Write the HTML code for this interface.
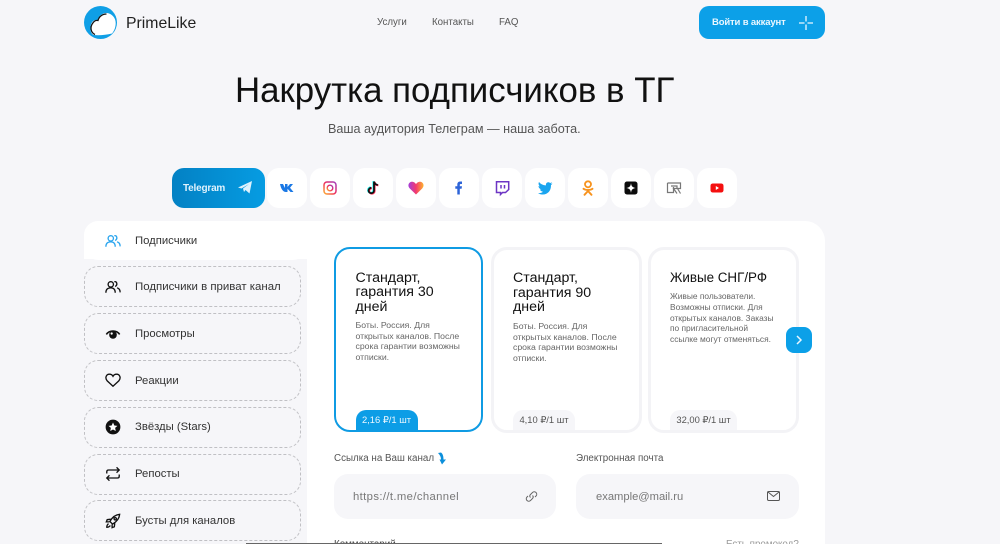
<!DOCTYPE html>
<html lang="ru"><head><meta charset="utf-8"><title>PrimeLike</title>
<style>
html,body{margin:0;padding:0;width:1000px;height:544px;overflow:hidden}
body{background:#f6f6f9;font-family:"Liberation Sans",sans-serif;color:#111}
#w{position:relative;width:1000px;height:544px;overflow:hidden}
.t{position:absolute;white-space:nowrap;line-height:1}
.a{position:absolute}
.s{position:absolute;top:168px;width:40px;height:40px;background:#fff;border-radius:12px}
.s svg{position:absolute;left:10px;top:10px;width:20px;height:20px}
.i{position:absolute;left:84px;width:215px;height:39px;border:1px dashed #c0c0c4;border-radius:14px}
.ic{position:absolute;left:105px;width:16px;height:16px;fill:none;stroke:#111;stroke-width:1.5}
.c{position:absolute;top:247px;width:144px;height:180px;border:3px solid #f3f3f6;border-radius:16px;background:#fff;overflow:hidden}
.h{position:absolute;left:19px;top:21px;font-size:14.2px;line-height:14.5px;color:#111;white-space:nowrap}
.d{position:absolute;left:19px;font-size:8.7px;line-height:10.7px;color:#666;white-space:nowrap}
.p{position:absolute;left:19px;bottom:0;height:20px;background:#f6f6f9;border-radius:10px 10px 0 0;font-size:9.4px;line-height:20px;text-align:center;color:#555}
.f{position:absolute;top:474px;width:222px;height:45px;background:#f6f6f9;border-radius:14px}
</style></head><body><div id="w">

<svg class="a" style="left:84px;top:6px" width="33" height="33" viewBox="0 0 33 33"><circle cx="16.500" cy="16.500" r="16.500" fill="#0f9fe6"/><path d="M10 29C6 28 6 21 7 18.500C8 15 11 13.500 13.500 14C15 9.500 19 6.700 23 7C28 7.500 31.700 12 31.700 17C31.700 21 30.500 24.500 28 27.500C22 29 15 29.500 10 29Z" fill="#fff"/><path d="M11 28.500C6.500 26.500 6 21 8.500 17.500C10 15 12 14 14 14.500C15 10.500 18.500 8 22.500 8" fill="none" stroke="#111" stroke-width="1.300"/></svg>
<div class="t" style="left:126px;top:15.500px;font-size:15.800px;color:#222">PrimeLike</div>
<div class="t" style="left:377px;top:18px;font-size:9.700px;color:#555">Услуги</div>
<div class="t" style="left:432px;top:18px;font-size:9.700px;color:#555">Контакты</div>
<div class="t" style="left:499px;top:18px;font-size:9.700px;color:#555">FAQ</div>

<div class="a" style="left:699px;top:6px;width:126px;height:33px;border-radius:10px;background:#0ca0e8"></div>
<div class="t" style="left:712px;top:18px;font-size:9.500px;font-weight:bold;color:#eaf7ff;letter-spacing:-.15px">Войти в аккаунт</div>
<svg class="a" style="left:799px;top:16px" width="14" height="14" viewBox="0 0 14 14"><path d="M0 7H5.500M8.500 7H14M7 0V5.500M7 8.500V14" stroke="#eaf7ff" stroke-width="1.300"/></svg>

<div class="t" style="left:235px;top:73.500px;font-size:34.850px;color:#111">Накрутка подписчиков в ТГ</div>
<div class="t" style="left:328px;top:123.300px;font-size:12.620px;color:#555">Ваша аудитория Телеграм — наша забота.</div>

<div class="a" style="left:172px;top:168px;width:93px;height:40px;border-radius:12px;background:linear-gradient(90deg,#0381c4,#069ce2)"></div>
<div class="t" style="left:183px;top:183.500px;font-size:10px;font-weight:bold;color:#dff2fd;letter-spacing:-.2px">Telegram</div>
<svg class="a" style="left:238px;top:181px" width="14" height="13" viewBox="0 0 14 13"><path d="M0 6.500L14 0L11.500 12.500L7.500 9L6 11L5 7.500L11 3L3.500 7.500Z" fill="#dff2fd"/></svg>

<div class="s" style="left:267px"><svg viewBox="0 0 20 20"><path d="M3 6H6L8 10V6H10.500V9L13 6H16L13 9.800L16.500 14H13.500L10.500 10.800V14H9C6 14 4 11 3 6Z" fill="#1a78e5"/></svg></div>
<div class="s" style="left:310px"><svg viewBox="0 0 20 20"><defs><linearGradient id="g" x1="0" y1="1" x2="1" y2="0"><stop offset="0" stop-color="#fdb030"/><stop offset=".5" stop-color="#ee2a5c"/><stop offset="1" stop-color="#a03fc0"/></linearGradient></defs><rect x="4" y="4" width="12" height="12" rx="3" fill="none" stroke="url(#g)" stroke-width="1.500"/><circle cx="10" cy="10" r="2.800" fill="none" stroke="url(#g)" stroke-width="1.400"/></svg></div>
<div class="s" style="left:353px"><svg viewBox="0 0 20 20"><path d="M11 3.500V12.500A2.700 2.700 0 1 1 8.300 9.800M11 3.500C11.300 5.500 12.500 6.700 14.800 7" fill="none" stroke="#25f4ee" stroke-width="2" transform="translate(-.6 -.4)"/><path d="M11 3.500V12.500A2.700 2.700 0 1 1 8.300 9.800M11 3.500C11.300 5.500 12.500 6.700 14.800 7" fill="none" stroke="#fe2c55" stroke-width="2" transform="translate(.6 .4)"/><path d="M11 3.500V12.500A2.700 2.700 0 1 1 8.300 9.800M11 3.500C11.300 5.500 12.500 6.700 14.800 7" fill="none" stroke="#111" stroke-width="1.800"/></svg></div>
<div class="s" style="left:396px"><svg viewBox="0 0 20 20"><defs><linearGradient id="l" x1="0" y1="0" x2="1" y2="0"><stop offset="0" stop-color="#a43ddb"/><stop offset=".5" stop-color="#f43a6d"/><stop offset="1" stop-color="#fdb42c"/></linearGradient></defs><path d="M10 16.500L3.800 10.500C1 7.500 3 3.800 6 3.800C8 3.800 9.300 5 10 6.200C10.700 5 12 3.800 14 3.800C17 3.800 19 7.500 16.200 10.500Z" fill="url(#l)"/></svg></div>
<div class="s" style="left:439px"><svg viewBox="0 0 20 20"><path d="M8.300 16.500V10.800H6.300V8.300H8.300V6.600C8.300 4.500 9.500 3.500 11.300 3.500H13V6H11.800C11 6 10.800 6.400 10.800 7V8.300H13L12.600 10.800H10.800V16.500Z" fill="#2d64d8"/></svg></div>
<div class="s" style="left:482px"><svg viewBox="0 0 20 20"><path d="M4.500 3.800H16.700V11.500L13.500 14.500H10.500L8.500 16.500V14.500H4.500Z" fill="none" stroke="#6d35c4" stroke-width="1.500"/><path d="M9 7V10.500M12.500 7V10.500" stroke="#6d35c4" stroke-width="1.500"/></svg></div>
<div class="s" style="left:525px"><svg viewBox="0 0 20 20"><path d="M17.500 5.500C16.900 5.800 16.300 6 15.700 6C16.400 5.600 16.800 5 17 4.300C16.400 4.700 15.700 4.900 15 5C13.500 3.500 10.500 4.500 11 7.400C8 7.300 5.500 5.900 4 4C3.100 5.500 3.700 7.500 5 8.400C4.500 8.400 4 8.200 3.500 8C3.600 9.700 4.700 11 6.400 11.300C5.900 11.500 5.400 11.500 4.900 11.400C5.400 12.800 6.600 13.700 8 13.700C6.500 14.900 4.700 15.300 3 15.200C9.500 18.800 16.300 14.800 16 7C16.600 6.600 17.100 6.100 17.500 5.500Z" fill="#1aa5ef"/></svg></div>
<div class="s" style="left:568px"><svg viewBox="0 0 20 20"><circle cx="10" cy="6.300" r="3" fill="none" stroke="#f7931e" stroke-width="1.800"/><path d="M5.500 10.800C8 12.500 12 12.500 14.500 10.800M10 12V13M10 13L6.500 16.800M10 13L13.500 16.800" fill="none" stroke="#f7931e" stroke-width="1.900" stroke-linecap="round"/></svg></div>
<div class="s" style="left:611px"><svg viewBox="0 0 20 20"><rect x="3.500" y="3.500" width="13" height="13" rx="2.500" fill="#0b0b0b"/><path d="M10 5C10.300 8.300 11.700 9.700 15 10C11.700 10.300 10.300 11.700 10 15C9.700 11.700 8.300 10.300 5 10C8.300 9.700 9.700 8.300 10 5Z" fill="#fff"/></svg></div>
<div class="s" style="left:654px"><svg viewBox="0 0 20 20"><path d="M3.500 5H16.500V10.500H13.500L16.500 15.500M3.500 5V14.500H9.500V9M7 8H13V10.500H9.500L13 15.500" fill="none" stroke="#777" stroke-width="1.200"/></svg></div>
<div class="s" style="left:697px"><svg viewBox="0 0 20 20"><rect x="3.500" y="5.500" width="13" height="9" rx="2.300" fill="#f40f0f"/><path d="M8.800 8L12 10L8.800 12Z" fill="#fff"/></svg></div>

<div class="a" style="left:84px;top:221px;width:741px;height:323px;background:#fff;border-radius:20px 20px 0 0"></div>
<div class="a" style="left:84px;top:259px;width:223px;height:285px;background:#f6f6f9"></div>
<div class="a" style="left:84px;top:221px;width:223px;height:39px;background:#fff;border-radius:14px 0 14px 14px"></div>

<svg class="ic" style="top:233px;stroke:#2ba5ee" viewBox="0 0 18 18"><circle cx="6.500" cy="6" r="3"/><path d="M1 15.500C1 11.500 3.500 10 6.500 10C9.500 10 11.500 11.500 11.500 15.500M10.500 3C13.500 2.500 14.500 6.500 11.500 8.500M13.500 10C16 10.500 17 12.500 17 15"/></svg>
<div class="t" style="left:135px;top:235.500px;font-size:11.300px;color:#333">Подписчики</div>

<div class="i" style="top:266px"></div><div class="i" style="top:313px"></div><div class="i" style="top:360px"></div><div class="i" style="top:407px"></div><div class="i" style="top:454px"></div><div class="i" style="top:500px"></div>

<svg class="ic" style="top:279px" viewBox="0 0 18 18"><circle cx="6.500" cy="6" r="3"/><path d="M1 15.500C1 11.500 3.500 10 6.500 10C9.500 10 11.500 11.500 11.500 15.500M10.500 3C13.500 2.500 14.500 6.500 11.500 8.500M13.500 10C16 10.500 17 12.500 17 15"/></svg>
<div class="t" style="left:135px;top:281.500px;font-size:11.450px;color:#333">Подписчики в приват канал</div>

<svg class="ic" style="top:326px" viewBox="0 0 18 18"><path d="M1.500 9.500C5 4.500 13 4.500 16.500 9.500" stroke-width="1.800"/><circle cx="9" cy="10" r="4.300" fill="#111" stroke="none"/><circle cx="7.500" cy="8.500" r="1.300" fill="#fff" stroke="none"/></svg>
<div class="t" style="left:135px;top:328.500px;font-size:11.300px;color:#333">Просмотры</div>

<svg class="ic" style="top:372px" viewBox="0 0 18 18"><path d="M9 16L2.500 10C-.5 6.500 1.500 2.500 5 2.500C7 2.500 8.300 3.500 9 4.800C9.700 3.500 11 2.500 13 2.500C16.500 2.500 18.500 6.500 15.500 10Z"/></svg>
<div class="t" style="left:135px;top:375.500px;font-size:11.300px;color:#333">Реакции</div>

<svg class="ic" style="top:419px" viewBox="0 0 18 18"><circle cx="9" cy="9" r="8.300" fill="#111" stroke="none"/><path d="M9 4L10.500 7.300L14 7.700L11.400 10L12.100 13.500L9 11.800L5.900 13.500L6.600 10L4 7.700L7.500 7.300Z" fill="#fff" stroke="none"/></svg>
<div class="t" style="left:135px;top:422px;font-size:11.300px;color:#333">Звёзды (Stars)</div>

<svg class="ic" style="top:466px" viewBox="0 0 18 18"><path d="M2 8.500V6.500C2 5 3 4.500 4 4.500H16M13 1.500L16 4.500L13 7.500M16 9.500V11.500C16 13 15 13.500 14 13.500H2M5 10.500L2 13.500L5 16.500"/></svg>
<div class="t" style="left:135px;top:468.500px;font-size:11.300px;color:#333">Репосты</div>

<svg class="ic" style="top:513px" viewBox="0 0 18 18"><path d="M16.500 1.500C11.500 2 8 5 5.500 9.500L8.500 12.500C13 10 16 6.500 16.500 1.500ZM6.500 7L2.500 7.500L1.500 10L5 10M11 11.500L10.500 15.500L8 16.500L8 13M4 12C2.500 13 2 15 2 16C3 16 5 15.500 6 14"/><circle cx="11.500" cy="6.500" r="1.300"/></svg>
<div class="t" style="left:135px;top:515.500px;font-size:11.300px;color:#333">Бусты для каналов</div>

<div class="c" style="left:334px;border:2.500px solid #0f9be3;width:145px;height:181px">
  <div class="h" style="left:19.500px;top:21.500px">Стандарт,<br>гарантия 30<br>дней</div>
  <div class="d" style="left:19.500px;top:71px">Боты. Россия. Для<br>открытых каналов. После<br>срока гарантии возможны<br>отписки.</div>
  <div class="p" style="left:19.500px;width:62px;background:#0c9de6;color:#eaf7ff">2,16 ₽/1 шт</div>
</div>
<div class="c" style="left:491px;width:145px">
  <div class="h">Стандарт,<br>гарантия 90<br>дней</div>
  <div class="d" style="top:71px">Боты. Россия. Для<br>открытых каналов. После<br>срока гарантии возможны<br>отписки.</div>
  <div class="p" style="width:62px">4,10 ₽/1 шт</div>
</div>
<div class="c" style="left:648px;width:145px">
  <div class="h" style="font-size:13.400px">Живые СНГ/РФ</div>
  <div class="d" style="top:41.300px;font-size:8.400px">Живые пользователи.<br>Возможны отписки. Для<br>открытых каналов. Заказы<br>по пригласительной<br>ссылке могут отменяться.</div>
  <div class="p" style="width:67px">32,00 ₽/1 шт</div>
</div>

<div class="a" style="left:786px;top:327px;width:26px;height:26px;border-radius:8px;background:#0ca0e8"></div>
<svg class="a" style="left:795px;top:335px" width="8" height="10" viewBox="0 0 8 10"><path d="M2 1L6 5L2 9" fill="none" stroke="#e8f6ff" stroke-width="1.500"/></svg>

<div class="t" style="left:334px;top:454px;font-size:9.800px;color:#555">Ссылка на Ваш канал</div>
<svg class="a" style="left:437px;top:452px" width="10" height="13" viewBox="0 0 10 13"><path d="M1 1L4 .5C6 2 6.500 4.500 6.500 7.500H9L5 12.500L2.500 7.500H4C4 5 3 3 1 1Z" fill="#0c8fdb"/></svg>
<div class="t" style="left:576px;top:454px;font-size:9.800px;color:#555">Электронная почта</div>

<div class="f" style="left:334px"></div>
<div class="t" style="left:353px;top:492px;font-size:11.300px;letter-spacing:.37px;color:#777">https://t.me/channel</div>
<svg class="a" style="left:525px;top:490px" width="13" height="13" viewBox="0 0 13 13"><path d="M5.500 7.500C4.500 6.500 4.700 5.300 5.500 4.500L7.500 2.500C8.500 1.500 10 1.500 11 2.500C12 3.500 12 5 11 6L10 7M7.500 5.500C8.500 6.500 8.300 7.700 7.500 8.500L5.500 10.500C4.500 11.500 3 11.500 2 10.500C1 9.500 1 8 2 7L3 6" fill="none" stroke="#666" stroke-width="1"/></svg>
<div class="f" style="left:576px;width:223px"></div>
<div class="t" style="left:596px;top:492px;font-size:11.200px;color:#777">example@mail.ru</div>
<svg class="a" style="left:767px;top:491px" width="13" height="10" viewBox="0 0 13 10"><rect x=".5" y=".5" width="12" height="9" rx="1.200" fill="none" stroke="#555"/><path d="M1 1L6.500 5.500L12 1" fill="none" stroke="#555"/></svg>

<div class="t" style="left:334px;top:540px;font-size:9.800px;color:#444">Комментарий</div>
<div class="t" style="left:726px;top:540px;font-size:9.800px;color:#999">Есть промокод?</div>
<div class="a" style="left:246px;top:543px;width:416px;height:1px;background:#666"></div>
</div></body></html>
